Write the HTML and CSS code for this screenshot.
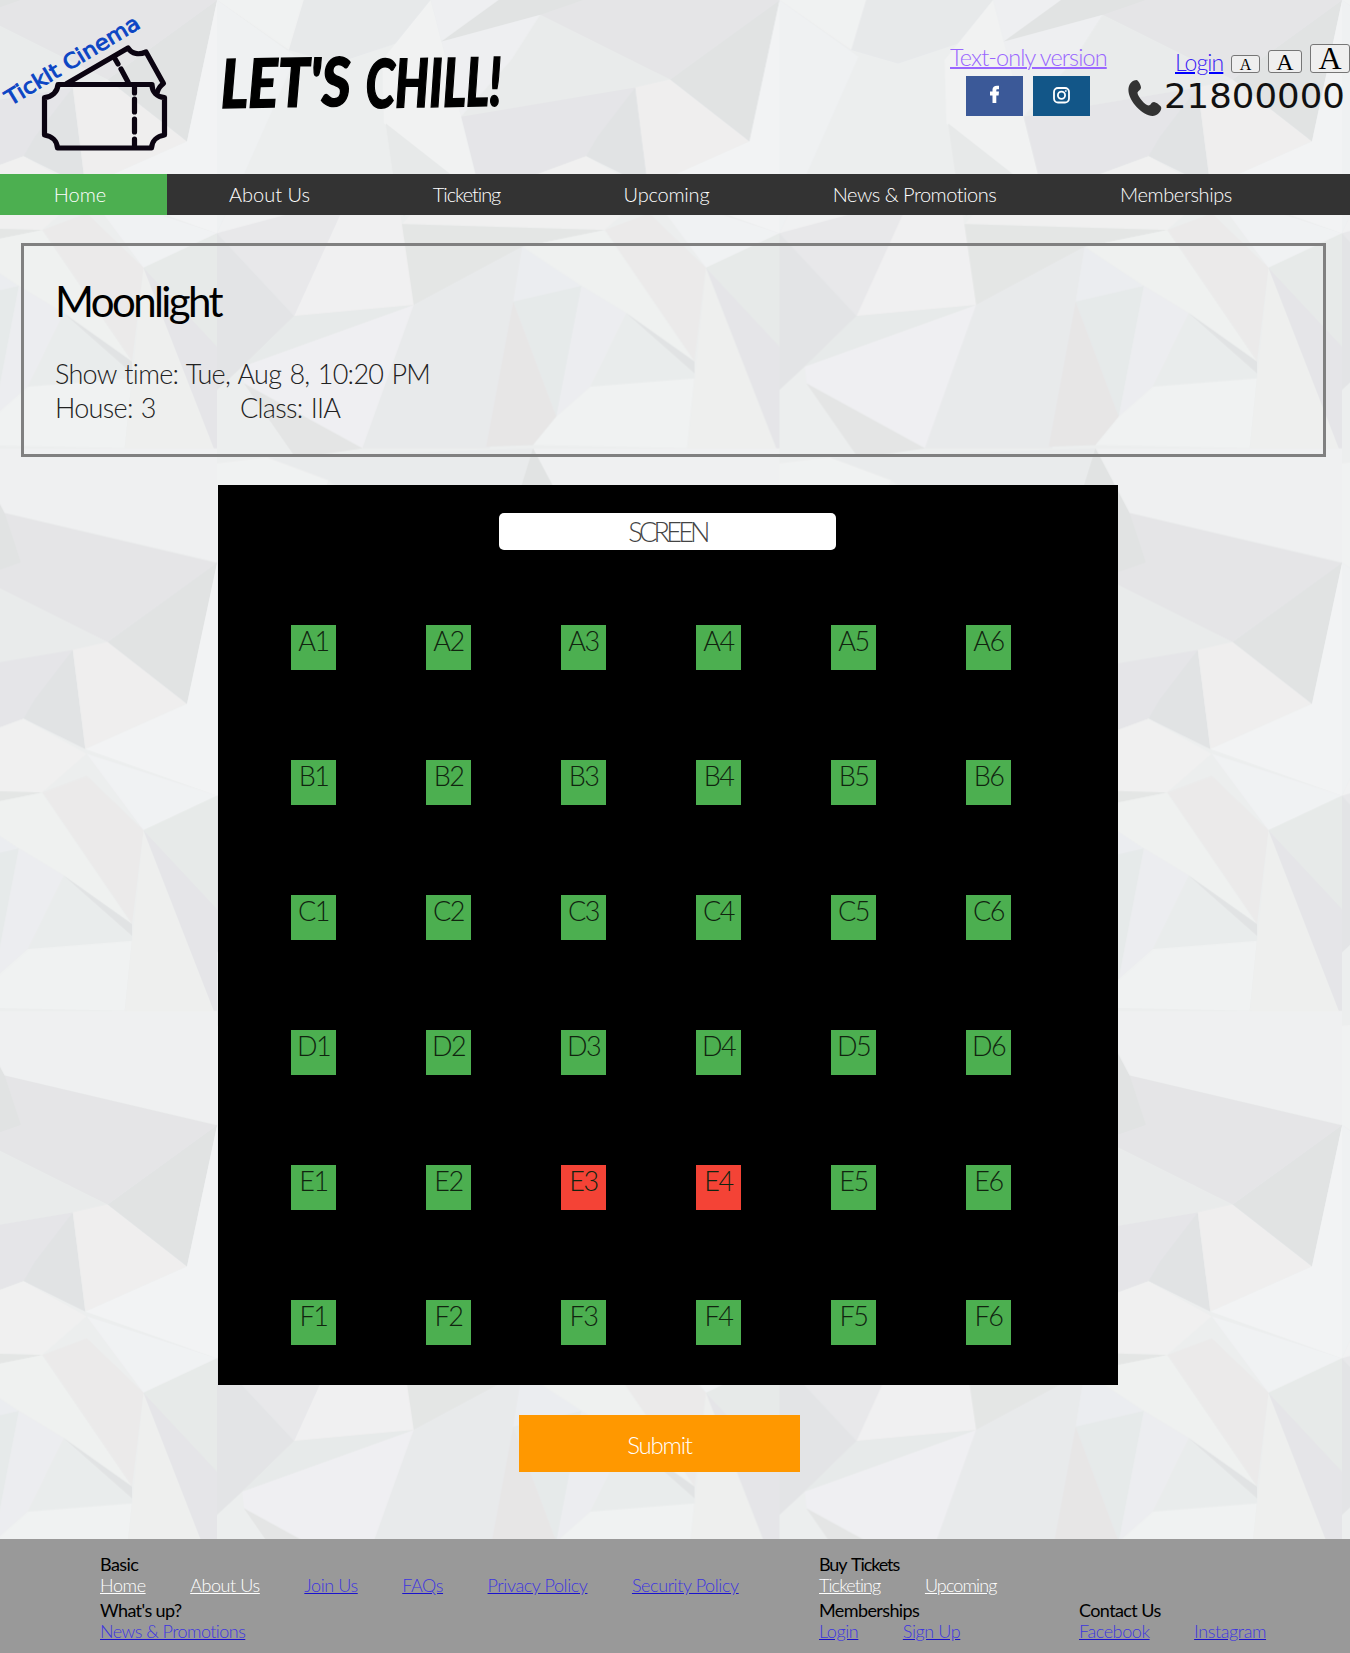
FILE: index.html
```html
<!DOCTYPE html>
<html lang="en">
<head>
<meta charset="utf-8">
<title>TickIt Cinema</title>
<link rel="stylesheet" href="styles.css">
</head>
<body>
<svg class="backdrop" width="1350" height="1653" aria-hidden="true">
  <defs>
    <g id="facets">
      <path fill="#e6e8ea" d="M20 0H595L500 130 330 190 200 150Z"/>
      <path fill="#eff1f3" d="M0 0 220 170 60 560 0 700Z"/>
      <path fill="#f2f3f3" d="M595 0 625 125 680 350 720 522 640 522 465 370 460 180Z"/>
      <path fill="#eeeff1" d="M595 0H785L900 45 820 180 680 350 625 125Z"/>
      <path fill="#e9ebeb" d="M900 45 1262 238 1165 262 680 350 820 180Z"/>
      <path fill="#e4e4e7" d="M680 350 1165 262 1028 468 860 535 720 522Z"/>
      <path fill="#dfe1e3" d="M1165 262 1200 560 1028 468 1060 410Z"/>
      <path fill="#efeeee" d="M1165 262 1262 238 1483 424 1200 560Z"/>
      <path fill="#dfe1e2" d="M1262 238 1567 0 1483 424Z"/>
      <path fill="#f3f4f5" d="M1567 0V700L1200 560 1483 424Z"/>
      <path fill="#e6e8e8" d="M470 370 650 522 520 650 490 522Z"/>
      <path fill="#f0f0f0" d="M640 522 720 522 860 535 1028 468 1204 574 1080 690 515 672Z"/>
      <path fill="#f1f2f4" d="M1204 574 1567 700 1362 803Z"/>
      <path fill="#ebeaea" d="M1080 690 1204 640 1362 803 1330 1085Z"/>
      <path fill="#f1f1f2" d="M0 700 60 560 490 522 345 640 190 645Z"/>
      <path fill="#e7e7ea" d="M0 700 190 645 345 640 215 948Z"/>
      <path fill="#e2e3e5" d="M0 700 215 948 70 1100 0 1170Z"/>
      <path fill="#f1f0f1" d="M345 640 490 522 515 672 548 915 215 948Z"/>
      <path fill="#e3e5e4" d="M515 672 1080 690 850 740 548 915Z"/>
      <path fill="#e6e9e9" d="M215 948 548 915 70 1100Z"/>
      <path fill="#efeff2" d="M548 915 405 1345 75 1150 70 1100Z"/>
      <path fill="#e3e4e4" d="M75 1150 405 1345 220 1375Z"/>
      <path fill="#e8e9eb" d="M548 915 850 740 825 905 760 1345H405Z"/>
      <path fill="#ebedf0" d="M850 740 1015 858 825 905Z"/>
      <path fill="#e5e9ea" d="M825 905 1015 858 945 1250Z"/>
      <path fill="#e6e5e5" d="M825 905 945 1250 880 1335 750 1340Z"/>
      <path fill="#eff1f0" d="M850 740 1080 690 1330 1085 1140 940 1015 858Z"/>
      <path fill="#ecedf0" d="M1015 858 1140 940 1040 1160 945 1250Z"/>
      <path fill="#e9ecec" d="M1140 940 1330 1085V1135L1040 1160Z"/>
      <path fill="#e0e2e3" d="M1140 940 1330 1085V1120Z"/>
      <path fill="#f0f2f2" d="M1040 1160 1330 1135 1310 1345 880 1335 945 1250Z"/>
      <path fill="#eeefee" d="M1362 803 1567 1370 1310 1345Z"/>
      <path fill="#e6eae8" d="M1362 803 1567 700V1040Z"/>
      <path fill="#e4e4e7" d="M1362 803 1567 1040V1370Z"/>
      <path fill="#f1f2f2" d="M0 1390 140 1372 310 1440 200 1837 0 1687Z"/>
      <path fill="#e9ebec" d="M140 1372 880 1345 785 1687H595L310 1440Z"/>
      <path fill="#eff0f1" d="M880 1345H1567V1687L975 1539Z"/>
      <path fill="#e4e4e6" d="M975 1539 1567 1689 1262 1926 900 1732Z"/>
      <path fill="#dfe1e1" d="M880 1345 975 1539 1020 1687 900 1732 625 1812 785 1687 850 1450Z"/>
    </g>
    <pattern id="paper" patternUnits="userSpaceOnUse" x="0" y="0" width="1566.6" height="1687.5" patternTransform="translate(217 0) scale(.35906 .33333)">
      <rect width="1567" height="1688" fill="#eceeee"/>
      <use href="#facets"/>
      <use href="#facets" y="-1687.5"/>
    </pattern>
  </defs>
  <rect width="1350" height="1653" fill="url(#paper)" opacity=".88"/>
</svg>

<header class="header">
  <svg class="logo" width="170" height="174" viewBox="0 0 170 174">
    <g fill="none" stroke="#0b0411" stroke-width="5.2" stroke-linejoin="round">
      <path d="M58 84.500H152C152 92 157 97 164.500 97.500V135C157 136 152 141 151.500 148H57.500C57 141 52 136 44.500 135V97.500C52 97 57.500 92 58 84.500Z"/>
      <path d="M66 84 128 48C132 54 139 55 146 52L163.500 83.500C160 86 158 89 157 93"/>
      <path d="M114 57 118 64M121 69 128 82M134.500 87V93M134.500 99V112M134.500 119V132M134.500 139V146" stroke-linecap="round"/>
    </g>
    <text class="brand" transform="translate(10.500 106) rotate(-31)" textLength="153" lengthAdjust="spacingAndGlyphs">TickIt Cinema</text>
  </svg>
  <svg class="slogan" width="300" height="80" viewBox="0 0 300 80">
    <text class="shout" transform="translate(0 62) rotate(-1)" textLength="130" lengthAdjust="spacingAndGlyphs">LET'S</text>
    <text class="shout" transform="translate(145 62) rotate(-1)" textLength="136" lengthAdjust="spacingAndGlyphs">CHILL!</text>
  </svg>
  <div class="links">
    <a class="text-only" href="#">Text-only version</a>
    <div class="social">
      <a class="facebook" href="#" aria-label="Facebook"><svg width="57" height="40" viewBox="0 0 57 40"><path fill="#fff" d="M26.500 27V19.500H24V15.500H26.500V13.500C26.500 11 28.300 9.700 31 9.700H33V13.300H31.500C30.500 13.300 30.300 13.700 30.300 14.500V15.500H33L32.600 19.500H30.300V27Z"/></svg></a>
      <a class="instagram" href="#" aria-label="Instagram"><svg width="57" height="40" viewBox="0 0 57 40" fill="none" stroke="#fff"><rect x="21" y="12" width="15" height="14.500" rx="4" stroke-width="1.800"/><circle cx="28.500" cy="19.300" r="3.600" stroke-width="1.800"/><circle cx="32.800" cy="15" r=".6"/></svg></a>
    </div>
  </div>
  <div class="contact">
    <div class="tools">
      <a class="login" href="#">Login</a>
      <button class="size small">A</button><button class="size medium">A</button><button class="size large">A</button>
    </div>
    <svg class="phone" width="222" height="42" viewBox="0 0 222 42">
      <path fill="#333" d="M6 3.500 8.500 3C10 3 13 8 13 10.500C13 13 9.500 14 9.500 16C10 20 17 28 20.500 28.500C23 28.500 23 25 26 25C28 25 33.500 29 33.300 31C33 35 29 39 24.500 39C14 39-3 21 1 9C2 6 4 4.200 6 3.500Z"/>
      <text class="number" x="36" y="31" textLength="181" lengthAdjust="spacingAndGlyphs">21800000</text>
    </svg>
  </div>
</header>

<nav class="nav">
  <a class="active" href="#">Home</a><a class="n2" href="#">About Us</a><a class="n3" href="#">Ticketing</a><a class="n4" href="#">Upcoming</a><a class="n5" href="#">News &amp; Promotions</a><a class="n6" href="#">Memberships</a>
</nav>

<main>
  <section class="show">
    <h1>Moonlight</h1>
    <p>Show time: Tue, Aug 8, 10:20 PM</p>
    <p class="details"><span>House: 3</span><span>Class: IIA</span></p>
  </section>
  <section class="hall">
    <div class="screen">SCREEN</div>
    <div class="seats">
      <span>A1</span><span>A2</span><span>A3</span><span>A4</span><span>A5</span><span>A6</span>
      <span>B1</span><span>B2</span><span>B3</span><span>B4</span><span>B5</span><span>B6</span>
      <span>C1</span><span>C2</span><span>C3</span><span>C4</span><span>C5</span><span>C6</span>
      <span>D1</span><span>D2</span><span>D3</span><span>D4</span><span>D5</span><span>D6</span>
      <span>E1</span><span>E2</span><span class="taken">E3</span><span class="taken">E4</span><span>E5</span><span>E6</span>
      <span>F1</span><span>F2</span><span>F3</span><span>F4</span><span>F5</span><span>F6</span>
    </div>
  </section>
  <button class="submit">Submit</button>
</main>

<footer class="footer">
  <div class="group basic">
    <h2>Basic</h2>
    <div class="row"><a class="light" href="#">Home</a><a class="light" href="#">About Us</a><a href="#">Join Us</a><a href="#">FAQs</a><a href="#">Privacy Policy</a><a href="#">Security Policy</a></div>
  </div>
  <div class="group buy">
    <h2>Buy Tickets</h2>
    <div class="row"><a class="light" href="#">Ticketing</a><a class="light" href="#">Upcoming</a></div>
  </div>
  <div class="group news">
    <h2>What's up?</h2>
    <div class="row"><a href="#">News &amp; Promotions</a></div>
  </div>
  <div class="group members">
    <h2>Memberships</h2>
    <div class="row"><a href="#">Login</a><a href="#">Sign Up</a></div>
  </div>
  <div class="group reach">
    <h2>Contact Us</h2>
    <div class="row"><a href="#">Facebook</a><a href="#">Instagram</a></div>
  </div>
</footer>
</body>
</html>
```
FILE: styles.css
```css
* { box-sizing: border-box; }
body {
  margin: 0;
  width: 1350px;
  height: 1653px;
  position: relative;
  overflow: hidden;
  background: #eceeee;
  font-family: Lato, "Open Sans", sans-serif;
  font-weight: 300;
  color: #000;
}
.backdrop { position: absolute; inset: 0; z-index: -1; }
h1, h2, p { margin: 0; }

.header { display: flex; height: 174px; }
.logo, .slogan, .phone { display: block; flex: none; }
.brand { font: 400 21px "DejaVu Sans", sans-serif; fill: #0b45c4; stroke: #0b45c4; stroke-width: .9px; }
.slogan { margin: 46px 0 0 51px; overflow: visible; }
.shout { font: italic 900 67px Lato, sans-serif; stroke: #000; stroke-width: 1.5px; }

.links { width: 157px; margin: 43px 0 0 429px; }
.text-only {
  display: block;
  height: 33px;
  font-size: 23.5px;
  line-height: 29px;
  letter-spacing: -.9px;
  white-space: nowrap;
  color: #9966ff;
  text-decoration-thickness: 2px;
}
.social { display: flex; gap: 10px; margin-left: 16px; }
.social a { width: 57px; height: 40px; }
.social svg { display: block; }
.facebook { background: #3b5998; }
.instagram { background: #125688; }

.contact { width: 222px; margin: 43px 0 0 21px; }
.tools { display: flex; align-items: flex-end; height: 30px; padding-left: 47px; }
.login {
  width: 56px;
  margin-bottom: -3px;
  font-size: 23px;
  line-height: 28px;
  letter-spacing: -.9px;
  color: #3a20f5;
  text-decoration-color: #00f;
  text-decoration-thickness: 2px;
}
.size {
  flex: none;
  padding: 0;
  border: 1px solid #767676;
  border-radius: 3px;
  background: #efefef;
  color: #000;
  font-family: "Liberation Serif", serif;
  line-height: 1;
}
.small { width: 29px; height: 18px; font-size: 16px; line-height: 17px; }
.medium { width: 34px; height: 23px; margin-left: 8px; font-size: 24px; line-height: 22px; }
.large { width: 40px; height: 29px; margin-left: 8px; font-size: 32px; line-height: 27px; }
.phone { margin-top: 4px; }
.number { font: 400 33px "DejaVu Sans", sans-serif; fill: #111; }

.nav { display: flex; height: 41px; background: #333; }
.nav a {
  color: #fff;
  text-decoration: none;
  text-align: center;
  font-size: 20px;
  line-height: 41px;
}
.nav .active { width: 167px; padding-right: 7px; background: #4caf50; }
.n2 { width: 205px; }
.nav .n3 { width: 189px; letter-spacing: -1.1px; }
.nav .n4 { width: 211px; letter-spacing: -.2px; }
.nav .n5 { width: 285px; letter-spacing: -.5px; }
.nav .n6 { width: 238px; letter-spacing: -.4px; }

.show {
  width: 1305px;
  height: 214px;
  margin: 28px 0 0 21px;
  padding: 29px 32px 0 31px;
  border: 3px solid gray;
  font-size: 27px;
  line-height: 34px;
  letter-spacing: -.7px;
  word-spacing: 1.5px;
  color: #222;
}
.show h1 { height: 82px; color: #000; font-size: 42px; font-weight: 400; line-height: 52px; letter-spacing: -2.6px; }
.details { display: flex; }
.details span:first-child { width: 185px; }

.hall { width: 900px; height: 900px; margin: 28px 0 0 218px; padding-top: 28px; background: #000; }
.screen {
  width: 337px;
  height: 37px;
  margin-left: 281px;
  border-radius: 5px;
  background: #fff;
  color: #444;
  text-align: center;
  font-size: 27px;
  line-height: 38px;
  letter-spacing: -3.7px;
}
.seats { display: grid; grid-template-columns: repeat(6, 45px); gap: 90px; margin: 75px 0 0 73px; }
.seats span { height: 45px; background: #4caf50; color: #10240f; text-align: center; font-size: 27px; line-height: 31px; letter-spacing: -1.5px; }
.seats .taken { background: #f44336; }

.submit {
  display: block;
  width: 281px;
  height: 57px;
  margin: 30px 0 0 519px;
  padding: 1px 0 0;
  border: 0;
  background: #ff9800;
  color: #fff;
  font-family: inherit;
  font-weight: 300;
  font-size: 24px;
  letter-spacing: -1.2px;
}

.footer {
  display: grid;
  grid-template: 46px 46px / 719px 260px auto;
  height: 114px;
  margin-top: 67px;
  padding: 15px 0 0 100px;
  background: #999;
}
.buy { grid-column: 2 / 4; }
.footer h2 { font-size: 18px; line-height: 21px; font-weight: 400; letter-spacing: -.6px; }
.row { display: flex; gap: 44.5px; font-size: 18px; line-height: 21px; letter-spacing: -.4px; white-space: nowrap; }
.footer .buy h2 { letter-spacing: -1.1px; word-spacing: 2px; }
.buy .row { letter-spacing: -.9px; }
.news .row { letter-spacing: -.55px; }
.row a { color: #3d35e0; text-decoration-color: #1a12cc; }
.row .light { color: #fff; text-decoration-color: #fff; }
```
